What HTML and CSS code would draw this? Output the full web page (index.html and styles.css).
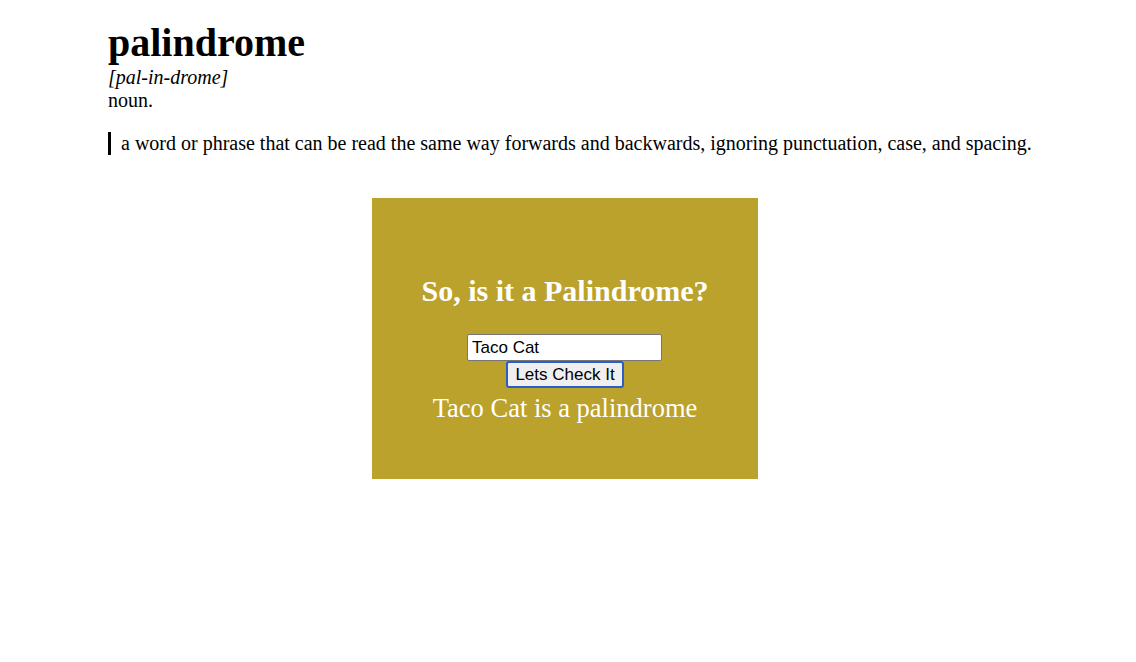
FILE: index.html
```html
<!DOCTYPE html>
<html>
<head>
<meta charset="utf-8">
<link rel="stylesheet" href="styles.css">
</head>
<body>
<main class="page">
  <header class="entry">
    <h1 class="word">palindrome</h1>
    <div class="pron">[pal-in-drome]</div>
    <div class="pos">noun.</div>
    <blockquote class="def">a word or phrase that can be read the same way forwards and backwards, ignoring punctuation, case, and spacing.</blockquote>
  </header>
  <section class="checker">
    <h2 class="checker-title">So, is it a Palindrome?</h2>
    <input class="checker-input" type="text" value="Taco Cat">
    <button class="checker-btn">Lets Check It</button>
    <div class="checker-result">Taco Cat is a palindrome</div>
  </section>
</main>
</body>
</html>
```
FILE: styles.css
```css
html, body {
  margin: 0;
  padding: 0;
  background: #ffffff;
}
body {
  font-family: "Liberation Serif", "Times New Roman", serif;
  font-size: 20px;
  color: #000;
}
.page {
  padding: 20px 0 0 108px;
}
.word {
  margin: 0;
  font-size: 40px;
  line-height: 46px;
  font-weight: bold;
}
.pron {
  font-style: italic;
  line-height: 23px;
}
.pos {
  line-height: 23px;
}
.def {
  margin: 20px 0 0 0;
  border-left: 3px solid #000;
  padding-left: 10px;
  line-height: 23px;
}
.checker {
  margin: 43px 0 0 264px;
  width: 386px;
  height: 281px;
  box-sizing: border-box;
  background: #bba22c;
  display: flex;
  flex-direction: column;
  align-items: center;
  padding-top: 76px;
  color: #fff;
}
.checker-title {
  margin: 0 0 26px 0;
  font-size: 30px;
  line-height: 34px;
  font-weight: bold;
}
.checker-input {
  width: 195px;
  height: 27px;
  box-sizing: border-box;
  margin: 0 1px 0 0;
  border: 1px solid #767676;
  border-radius: 2px;
  padding: 0 4px;
  font-family: "Liberation Sans", Arial, sans-serif;
  font-size: 17px;
  color: #000;
  background: #fff;
}
.checker-btn {
  width: 118px;
  height: 27px;
  box-sizing: border-box;
  margin: 0;
  border: 2px solid #2c5ec9;
  border-radius: 3px;
  padding: 0;
  font-family: "Liberation Sans", Arial, sans-serif;
  font-size: 17px;
  color: #000;
  background: #efefef;
}
.checker-result {
  font-size: 26.5px;
  line-height: 40px;
}
```
